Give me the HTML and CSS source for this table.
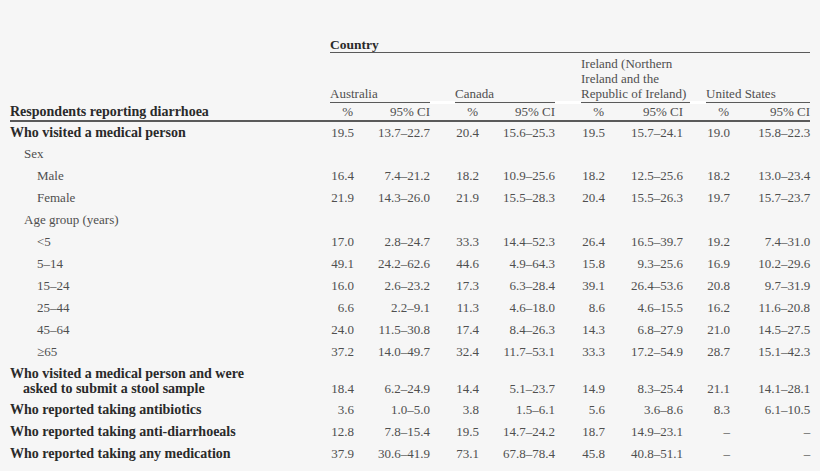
FILE: index.html
```html
<!DOCTYPE html>
<html lang="en">
<head>
<meta charset="utf-8">
<title>Respondents reporting diarrhoea</title>
<link rel="stylesheet" href="styles.css">
</head>
<body>
<table class="data">
  <colgroup>
    <col class="c-label">
    <col class="c-pct"><col class="c-ci-aus">
    <col class="c-gap1">
    <col class="c-pct"><col class="c-ci-can">
    <col class="c-gap2">
    <col class="c-pct"><col class="c-ci-ire">
    <col class="c-gap3">
    <col class="c-pct"><col class="c-ci-us">
  </colgroup>
  <thead>
    <tr class="row-country">
      <th class="lbl"></th>
      <th class="country" colspan="11">Country</th>
    </tr>
    <tr class="row-names">
      <th class="lbl"></th>
      <th class="name" colspan="2">Australia</th>
      <th class="gap"></th>
      <th class="name" colspan="2">Canada</th>
      <th class="gap"></th>
      <th class="name" colspan="2">Ireland (Northern<br>Ireland and the<br>Republic of Ireland)</th>
      <th class="gap"></th>
      <th class="name" colspan="2">United States</th>
    </tr>
    <tr class="row-sub">
      <th class="lbl main">Respondents reporting diarrhoea</th>
      <th class="pct">%</th><th class="ci">95% CI</th>
      <th></th>
      <th class="pct">%</th><th class="ci">95% CI</th>
      <th></th>
      <th class="pct">%</th><th class="ci ire">95% CI</th>
      <th></th>
      <th class="pct">%</th><th class="ci">95% CI</th>
    </tr>
  </thead>
  <tbody>
    <tr class="row-first">
      <td class="lbl main">Who visited a medical person</td>
      <td class="pct">19.5</td><td class="ci">13.7–22.7</td><td></td>
      <td class="pct">20.4</td><td class="ci">15.6–25.3</td><td></td>
      <td class="pct">19.5</td><td class="ci ire">15.7–24.1</td><td></td>
      <td class="pct">19.0</td><td class="ci">15.8–22.3</td>
    </tr>
    <tr>
      <td class="lbl sub">Sex</td>
      <td></td><td></td><td></td><td></td><td></td><td></td><td></td><td></td><td></td><td></td><td></td>
    </tr>
    <tr>
      <td class="lbl item">Male</td>
      <td class="pct">16.4</td><td class="ci">7.4–21.2</td><td></td>
      <td class="pct">18.2</td><td class="ci">10.9–25.6</td><td></td>
      <td class="pct">18.2</td><td class="ci ire">12.5–25.6</td><td></td>
      <td class="pct">18.2</td><td class="ci">13.0–23.4</td>
    </tr>
    <tr>
      <td class="lbl item">Female</td>
      <td class="pct">21.9</td><td class="ci">14.3–26.0</td><td></td>
      <td class="pct">21.9</td><td class="ci">15.5–28.3</td><td></td>
      <td class="pct">20.4</td><td class="ci ire">15.5–26.3</td><td></td>
      <td class="pct">19.7</td><td class="ci">15.7–23.7</td>
    </tr>
    <tr>
      <td class="lbl sub">Age group (years)</td>
      <td></td><td></td><td></td><td></td><td></td><td></td><td></td><td></td><td></td><td></td><td></td>
    </tr>
    <tr>
      <td class="lbl item">&lt;5</td>
      <td class="pct">17.0</td><td class="ci">2.8–24.7</td><td></td>
      <td class="pct">33.3</td><td class="ci">14.4–52.3</td><td></td>
      <td class="pct">26.4</td><td class="ci ire">16.5–39.7</td><td></td>
      <td class="pct">19.2</td><td class="ci">7.4–31.0</td>
    </tr>
    <tr>
      <td class="lbl item">5–14</td>
      <td class="pct">49.1</td><td class="ci">24.2–62.6</td><td></td>
      <td class="pct">44.6</td><td class="ci">4.9–64.3</td><td></td>
      <td class="pct">15.8</td><td class="ci ire">9.3–25.6</td><td></td>
      <td class="pct">16.9</td><td class="ci">10.2–29.6</td>
    </tr>
    <tr>
      <td class="lbl item">15–24</td>
      <td class="pct">16.0</td><td class="ci">2.6–23.2</td><td></td>
      <td class="pct">17.3</td><td class="ci">6.3–28.4</td><td></td>
      <td class="pct">39.1</td><td class="ci ire">26.4–53.6</td><td></td>
      <td class="pct">20.8</td><td class="ci">9.7–31.9</td>
    </tr>
    <tr>
      <td class="lbl item">25–44</td>
      <td class="pct">6.6</td><td class="ci">2.2–9.1</td><td></td>
      <td class="pct">11.3</td><td class="ci">4.6–18.0</td><td></td>
      <td class="pct">8.6</td><td class="ci ire">4.6–15.5</td><td></td>
      <td class="pct">16.2</td><td class="ci">11.6–20.8</td>
    </tr>
    <tr>
      <td class="lbl item">45–64</td>
      <td class="pct">24.0</td><td class="ci">11.5–30.8</td><td></td>
      <td class="pct">17.4</td><td class="ci">8.4–26.3</td><td></td>
      <td class="pct">14.3</td><td class="ci ire">6.8–27.9</td><td></td>
      <td class="pct">21.0</td><td class="ci">14.5–27.5</td>
    </tr>
    <tr>
      <td class="lbl item">≥65</td>
      <td class="pct">37.2</td><td class="ci">14.0–49.7</td><td></td>
      <td class="pct">32.4</td><td class="ci">11.7–53.1</td><td></td>
      <td class="pct">33.3</td><td class="ci ire">17.2–54.9</td><td></td>
      <td class="pct">28.7</td><td class="ci">15.1–42.3</td>
    </tr>
    <tr class="row-two">
      <td class="lbl main hang">Who visited a medical person and were<br>asked to submit a stool sample</td>
      <td class="pct">18.4</td><td class="ci">6.2–24.9</td><td></td>
      <td class="pct">14.4</td><td class="ci">5.1–23.7</td><td></td>
      <td class="pct">14.9</td><td class="ci ire">8.3–25.4</td><td></td>
      <td class="pct">21.1</td><td class="ci">14.1–28.1</td>
    </tr>
    <tr>
      <td class="lbl main">Who reported taking antibiotics</td>
      <td class="pct">3.6</td><td class="ci">1.0–5.0</td><td></td>
      <td class="pct">3.8</td><td class="ci">1.5–6.1</td><td></td>
      <td class="pct">5.6</td><td class="ci ire">3.6–8.6</td><td></td>
      <td class="pct">8.3</td><td class="ci">6.1–10.5</td>
    </tr>
    <tr>
      <td class="lbl main">Who reported taking anti-diarrhoeals</td>
      <td class="pct">12.8</td><td class="ci">7.8–15.4</td><td></td>
      <td class="pct">19.5</td><td class="ci">14.7–24.2</td><td></td>
      <td class="pct">18.7</td><td class="ci ire">14.9–23.1</td><td></td>
      <td class="pct">–</td><td class="ci">–</td>
    </tr>
    <tr>
      <td class="lbl main">Who reported taking any medication</td>
      <td class="pct">37.9</td><td class="ci">30.6–41.9</td><td></td>
      <td class="pct">73.1</td><td class="ci">67.8–78.4</td><td></td>
      <td class="pct">45.8</td><td class="ci ire">40.8–51.1</td><td></td>
      <td class="pct">–</td><td class="ci">–</td>
    </tr>
  </tbody>
</table>
</body>
</html>
```

FILE: styles.css
```css
html, body {
  margin: 0;
  padding: 0;
  background: #f6f6f6;
}

body {
  font-family: "Liberation Serif", "Times New Roman", serif;
  font-size: 13px;
  color: #4f4f4f;
}

.data {
  border-collapse: collapse;
  table-layout: fixed;
  width: 800px;
  margin: 37px 0 0 10px;
}

.c-label { width: 320px; }
.c-pct { width: 24px; }
.c-ci-aus { width: 76px; }
.c-gap1 { width: 25px; }
.c-ci-can { width: 76px; }
.c-gap2 { width: 26px; }
.c-ci-ire { width: 85px; }
.c-gap3 { width: 16px; }
.c-ci-us { width: 80px; }

th, td {
  padding: 0;
  font-weight: normal;
  white-space: nowrap;
}

.row-country th {
  line-height: 15px;
  vertical-align: bottom;
}

.country {
  text-align: left;
  font-weight: bold;
  font-size: 13.5px;
  color: #2a2a2a;
  border-bottom: 1px solid #5a5a5a;
}

.row-names th {
  line-height: 15px;
  vertical-align: bottom;
  padding-top: 3px;
  padding-bottom: 1px;
}

.name {
  text-align: left;
  border-bottom: 1px solid #5a5a5a;
}

.gap {
  border-bottom: 3px solid #ffffff;
}

.row-sub th {
  height: 16px;
  line-height: 16px;
  vertical-align: bottom;
  border-bottom: 2px solid #5a5a5a;
}

tbody td {
  height: 22px;
  line-height: 22px;
  vertical-align: middle;
}

.row-first td {
  height: 21px;
  line-height: 21px;
}

.lbl {
  text-align: left;
}

.main {
  font-weight: bold;
  font-size: 14px;
  color: #2a2a2a;
}

.sub {
  padding-left: 14px;
}

.item {
  padding-left: 27px;
}

.pct {
  text-align: right;
}

.row-sub .pct {
  padding-right: 1px;
}

.ci {
  text-align: right;
}

.ci.ire {
  padding-right: 7px;
}

.row-two td {
  height: 30px;
  line-height: 15px;
  vertical-align: bottom;
  padding-top: 3px;
  padding-bottom: 3px;
}

.hang {
  padding-left: 13px;
  text-indent: -13px;
}
```
